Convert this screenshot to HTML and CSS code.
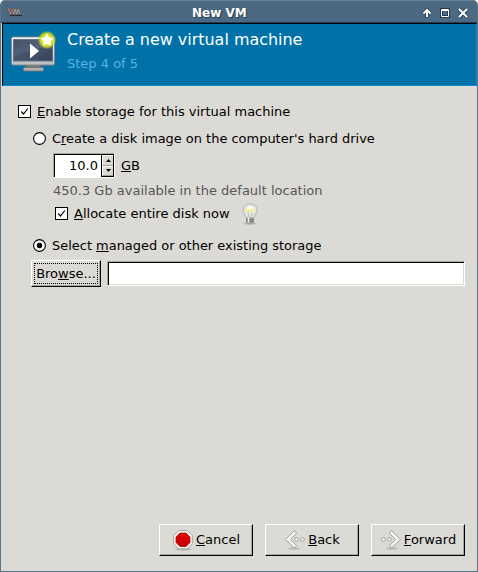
FILE: index.html
```html
<!DOCTYPE html>
<html lang="en">
<head>
<meta charset="utf-8">
<title>New VM</title>
<link rel="stylesheet" href="styles.css">
</head>
<body>
<div class="window">
  <header class="titlebar">
    <svg class="app-icon" width="16" height="10" viewBox="0 0 16 10"><path d="M1 1h12l2 7H4z" fill="#606066"/><path d="M2 1l3 6 1-5 2 5 1-5 2 5 1-5 2 5" fill="none" stroke="#aaa6a6" stroke-width=".8"/><path d="M1 2l2 5M6 2v5" stroke="#8d4350"/><path d="M4 8.500h12" stroke="#242a30"/></svg>
    <h1 class="window-title">New VM</h1>
    <div class="window-controls">
      <svg width="10" height="10" viewBox="0 0 10 10"><path d="M5 9.500V3M1.500 5.500L5 2l3.500 3.500" fill="none" stroke="#263b4d" stroke-width="3.600"/><path d="M5 9V3M1.500 5.500L5 2l3.500 3.500" fill="none" stroke="#fff" stroke-width="2"/></svg>
      <svg width="10" height="10" viewBox="0 0 10 10"><path d="M1.500 1.500h7v7h-7z" fill="none" stroke="#263b4d" stroke-width="3"/><path d="M1.500 1.500h7v7h-7zM1 2.500h8" fill="none" stroke="#fff"/></svg>
      <svg width="10" height="10" viewBox="0 0 10 10"><path d="M1 1l8 8M9 1L1 9" stroke="#263b4d" stroke-width="3.600"/><path d="M1 1l8 8M9 1L1 9" stroke="#fff" stroke-width="2"/></svg>
    </div>
  </header>
  <section class="banner">
    <svg class="vm-icon" width="48" height="48" viewBox="0 0 48 48">
      <defs>
        <linearGradient id="frame" x2="0" y2="1"><stop stop-color="#fff"/><stop offset="1" stop-color="#bcbcbc"/></linearGradient>
        <linearGradient id="screen" x2="1" y2="1"><stop stop-color="#303e55"/><stop offset=".5" stop-color="#46546b"/><stop offset="1" stop-color="#35425a"/></linearGradient>
        <radialGradient id="glow"><stop offset=".35" stop-color="#f6f44a"/><stop offset=".7" stop-color="#d4df20" stop-opacity=".9"/><stop offset="1" stop-color="#a9c72b" stop-opacity="0"/></radialGradient>
      </defs>
      <path d="M16 35h13l1 4H15z" fill="#777"/>
      <rect x="12.500" y="37.500" width="20" height="3.500" rx="1" fill="#b2b2b2" stroke="#777"/>
      <rect x=".5" y="7" width="43" height="28" rx="1.500" fill="url(#frame)" stroke="#8a8a8a"/>
      <rect x="2.500" y="9.500" width="39" height="21.500" fill="url(#screen)" stroke="#657188"/>
      <path d="M3 10h38v7Q20 18 3 27z" fill="#77839a" opacity=".3"/>
      <path d="M19 13.500v15l9-7.500z" fill="#fff"/>
      <circle cx="36" cy="10" r="9.500" fill="url(#glow)"/>
      <path d="M36 3.500l2 4 4.500.7-3.200 3.100.8 4.500-4.100-2.100-4 2.100.7-4.500-3.200-3.100 4.500-.7z" fill="#fff"/>
    </svg>
    <div>
      <h2 class="banner-title">Create a new virtual machine</h2>
      <p class="banner-step">Step 4 of 5</p>
    </div>
  </section>
  <main class="content">
    <div class="row enable-row">
      <span class="check"><svg width="11" height="11" viewBox="0 0 11 11"><path d="M2.300 5.500L4.500 8 8.800 2.500" fill="none" stroke="#000" stroke-width="1.200"/></svg></span>
      <span><u>E</u>nable storage for this virtual machine</span>
    </div>
    <div class="row create-row">
      <svg class="radio" width="13" height="13" viewBox="0 0 13 13"><circle cx="6.500" cy="6.500" r="5.900" fill="#fff" stroke="#000" stroke-width="1.100"/></svg>
      <span class="radio-label">C<u>r</u>eate a disk image on the computer's hard drive</span>
    </div>
    <div class="row size-row">
      <div class="spin">
        <span class="spin-value">10.0</span>
        <div class="spin-buttons">
          <span><svg width="5" height="3" viewBox="0 0 5 3"><path d="M0 3l2.500-3L5 3z"/></svg></span>
          <span><svg width="5" height="3" viewBox="0 0 5 3"><path d="M0 0l2.500 3L5 0z"/></svg></span>
        </div>
      </div>
      <span><u>G</u>B</span>
    </div>
    <p class="row available">450.3 Gb available in the default location</p>
    <div class="row allocate-row">
      <span class="check"><svg width="11" height="11" viewBox="0 0 11 11"><path d="M2.300 5.500L4.500 8 8.800 2.500" fill="none" stroke="#000" stroke-width="1.200"/></svg></span>
      <span><u>A</u>llocate entire disk now</span>
      <svg class="bulb" width="16" height="22" viewBox="0 0 16 22">
        <ellipse cx="8" cy="20.500" rx="6" ry="1.200" fill="#999" opacity=".7"/>
        <path d="M8 .8C3.800.8 1 3.600 1 7.300c0 3 2.700 4.600 3.200 7.700h7.600c.5-3.100 3.200-4.700 3.200-7.700C15 3.600 12.200.8 8 .8z" fill="#e4e5e0" stroke="#adb0aa" stroke-width=".9"/>
        <ellipse cx="8" cy="7" rx="4.500" ry="2.800" fill="#fffbd0"/>
        <path d="M4 6.500q1 2.500 4 1.500t4-1.500" fill="none" stroke="#f0e060" stroke-width="1.200"/>
        <path d="M5.500 4.500h5" stroke="#fff" stroke-width="1.500"/>
        <path d="M6 9l1 5M10 9l-1 5" stroke="#bbb" stroke-width=".8"/>
        <path d="M4 14.500h8v4.500l-2 1.500H6L4 19z" fill="#a0a29f"/>
        <path d="M4 16.500h8M4 18.500h8" stroke="#686a66" stroke-width=".8"/>
        <path d="M6.500 14.500v5" stroke="#f4f4f2" stroke-width="1.500"/>
      </svg>
    </div>
    <div class="row select-row">
      <svg class="radio" width="13" height="13" viewBox="0 0 13 13"><circle cx="6.500" cy="6.500" r="5.900" fill="#fff" stroke="#000" stroke-width="1.100"/><circle cx="6.500" cy="6.500" r="2.700"/></svg>
      <span class="radio-label">Select <u>m</u>anaged or other existing storage</span>
    </div>
    <div class="row browse-row">
      <button class="button browse"><span class="focus">Bro<u>w</u>se...</span></button>
      <input class="entry" type="text" aria-label="Storage path">
    </div>
  </main>
  <footer class="actions">
    <button class="button">
      <svg width="22" height="22" viewBox="0 0 22 22"><defs><linearGradient id="stop" x2="0" y2="1"><stop stop-color="#e50808"/><stop offset="1" stop-color="#bd0000"/></linearGradient></defs><ellipse cx="11" cy="20.300" rx="8" ry="1.500" fill="#999" opacity=".6"/><path d="M6.700 1.500h8.600l5 5v8.300l-5 5H6.700l-5-5V6.500z" fill="#f3f3f1" stroke="#a5a7a3"/><path d="M8 4h6l4 4v5.500l-4 4H8l-4-4V8z" fill="url(#stop)" stroke="#b50000" stroke-width=".7"/></svg>
      <span><u>C</u>ancel</span>
    </button>
    <button class="button">
      <svg width="22" height="22" viewBox="0 0 22 22"><ellipse cx="10" cy="19.500" rx="6" ry="1.500" fill="#aaa" opacity=".6"/><g fill="#f2f2f0" stroke="#999b97" stroke-width=".9"><path d="M10.500 1.500L1.500 10.500l9 8.500 2-2.500-6-6 6-6z"/><circle cx="12.500" cy="10.500" r="1.900"/><circle cx="18.500" cy="10.500" r="1.900"/></g></svg>
      <span><u>B</u>ack</span>
    </button>
    <button class="button">
      <svg width="22" height="22" viewBox="0 0 22 22"><ellipse cx="12" cy="19.500" rx="6" ry="1.500" fill="#aaa" opacity=".6"/><g fill="#f2f2f0" stroke="#999b97" stroke-width=".9"><path d="M11.500 1.500l9 9-9 8.500-2-2.500 6-6-6-6z"/><circle cx="9.500" cy="10.500" r="1.900"/><circle cx="3.500" cy="10.500" r="1.900"/></g></svg>
      <span><u>F</u>orward</span>
    </button>
  </footer>
</div>
</body>
</html>
```
FILE: styles.css
```css
* { box-sizing: border-box; }
body { margin: 0; background: #fff; font: 13px/16px "DejaVu Sans", sans-serif; color: #000; }
h1, h2, p { margin: 0; font-weight: normal; }
u { text-decoration-thickness: 1px; text-underline-offset: 1px; text-decoration-skip-ink: none; }
svg { display: block; flex: none; }
.window { width: 478px; height: 572px; display: flex; flex-direction: column; background: #dcdad5; border: 1px solid #5b748a; border-top: 0; border-radius: 5px 5px 0 0; overflow: hidden; }
.titlebar { height: 23px; display: flex; align-items: center; padding: 2px 9px 0 5px; background: #4b6983; border-top: 1px solid #6a7f92; border-bottom: 1px solid #163f5b; }
.app-icon { margin-top: -2px; }
.window-title { flex: 1; padding-left: 170px; font-size: 12px; font-weight: bold; color: #fff; text-shadow: 1px 1px 1px #263b4d; }
.window-controls { display: flex; gap: 8px; }
.window-controls svg { overflow: visible; }
.banner { height: 63px; display: flex; gap: 8px; padding: 6px 0 0 8px; background: #0072a8; border: 1px solid #000; border-right-color: #0a8bd0; border-bottom-color: #0a8bd0; margin-left: 1px; }
.banner-title { font-size: 15.950px; line-height: 20px; color: #fff; }
.banner-step { margin-top: 6px; color: #58b2e2; }
.content { flex: 1; padding: 16px 12px 0 17px; }
.row { display: flex; align-items: center; white-space: nowrap; }
.check { width: 13px; height: 13px; border: 1px solid #000; background: #fff; flex: none; margin-right: 6px; }
.enable-row { height: 19px; }
.create-row { height: 19px; margin: 8px 0 0 15px; }
.radio { margin-right: 6px; }
.radio-label { font-size: 12.960px; }
.size-row { height: 25px; margin: 5px 0 0 35px; gap: 6px; }
.spin { width: 62px; height: 25px; display: flex; padding: 1px 0 0 1px; border: 1px solid #aaa69e; border-bottom-color: #fff; border-right-color: #fff; background: #fff; box-shadow: inset 1px 1px #000; }
.spin-value { flex: 1; text-align: right; padding: 3px 3px 0 0; }
.spin-buttons { width: 13px; display: grid; grid-template-rows: 1fr 1fr; border: solid #000; border-width: 0 1px 1px; }
.spin-buttons span { display: flex; align-items: center; justify-content: center; background: #dcdad5; border: 1px solid #fff; border-right: 0; border-bottom-color: #a09d96; }
.available { height: 19px; margin: 3px 0 0 35px; color: #565656; }
.allocate-row { height: 24px; margin: 2px 0 0 37px; }
.allocate-row .check { margin-top: -1px; }
.bulb { margin-left: 12px; }
.select-row { height: 19px; margin: 10px 0 0 15px; }
.browse-row { align-items: flex-start; margin: 5px 0 0 13px; gap: 6px; }
.button { width: 94px; height: 32px; display: flex; align-items: center; justify-content: center; gap: 2px; padding: 0; font: inherit; color: #000; background: #dcdad5; border: 1px solid #fff; border-right-color: #000; border-bottom-color: #000; box-shadow: inset -1px -1px #aaa8a2; }
.browse { width: 70px; height: 27px; }
.focus { width: 64px; height: 21px; border: 1px dotted #000; line-height: 19px; }
.entry { flex: 1; min-width: 0; height: 25px; margin-top: 1px; background: #fff; border: 1px solid #aaa69e; border-right-color: #fff; border-bottom-color: #fff; border-radius: 0; box-shadow: inset 1px 1px #000, inset -1px -1px #dcdad5; padding: 0 3px; font: inherit; }
.actions { display: flex; justify-content: flex-end; gap: 12px; padding: 0 12px 15px; }
```
